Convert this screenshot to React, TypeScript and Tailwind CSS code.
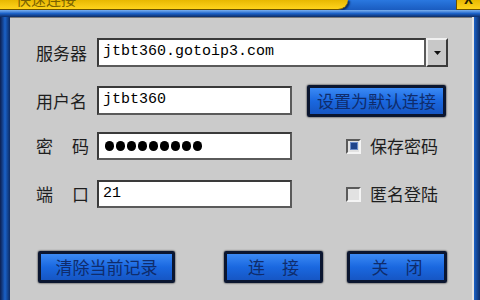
import React from 'react'

const cjk = { fontFamily: '"Noto Sans CJK SC", "Noto Sans", sans-serif' }
const mono = { fontFamily: '"Liberation Mono", "DejaVu Sans Mono", monospace' }

function Field({ w, children }: { w: string; children?: React.ReactNode }) {
  return (
    <div
      className={`${w} h-full bg-white border-2 border-t-[#3a3a3a] border-l-[#3a3a3a] border-r-[#5a5a5a] border-b-[#5a5a5a] flex items-center px-[4px] text-[15px] text-black`}
      style={mono}
    >
      {children}
    </div>
  )
}

function BlueButton({ w, children }: { w: string; children: React.ReactNode }) {
  return (
    <div
      className={`${w} h-[32px] shrink-0 rounded-[2px] border-[3px] border-[#0b1630] bg-gradient-to-b from-[#3b8af5] via-[#1a68e0] to-[#1656c4] shadow-[0_0_2px_#000] flex items-center justify-center text-[17px] text-[#0f2c6c]`}
      style={cjk}
    >
      {children}
    </div>
  )
}

function Checkbox({ checked, label }: { checked: boolean; label: string }) {
  return (
    <div className="flex items-center ml-[54px]">
      <div className="w-[15px] h-[15px] bg-[#e2e2e2] border-2 border-t-[#5a5a5a] border-l-[#5a5a5a] border-r-[#f4f4f4] border-b-[#f4f4f4] flex items-center justify-center">
        {checked && <div className="w-[8px] h-[8px] bg-[#20448a] border border-[#6c8cc8]" />}
      </div>
      <span className="ml-[9px] text-[17px] text-[#1e1e1e]" style={cjk}>{label}</span>
    </div>
  )
}

export default function App() {
  return (
    <div className="w-[480px] h-[300px] overflow-hidden bg-[#1a62c8] flex flex-col">
      {/* title strip */}
      <div className="h-[10px] flex shrink-0 bg-gradient-to-b from-[#2a78e0] to-[#1a5cc0]">
        <div className="w-[348px] h-full overflow-hidden rounded-br-[10px] bg-gradient-to-b from-[#e8b800] to-[#ffd41a] border-b border-[#6a5000] shadow-[2px_1px_2px_#0a2a60]">
          <div className="mt-[-10px] ml-[16px] text-[15px] leading-[18px] text-[#7a6200]" style={cjk}>快速连接</div>
        </div>
        <div className="flex-1" />
        <div className="w-[24px] h-full overflow-hidden bg-gradient-to-b from-[#e8b800] to-[#ffd41a] border-l border-b border-[#6a5000] flex justify-center">
          <span className="mt-[-7px] text-[14px] font-bold leading-[14px] text-[#2a2200]" style={mono}>X</span>
        </div>
      </div>
      <div className="h-[7px] shrink-0 bg-gradient-to-b from-[#7cb2f0] via-[#1c62c8] to-[#0c2c66]" />
      <div className="flex-1 flex">
        <div className="w-[10px] shrink-0 bg-gradient-to-r from-[#0c2050] via-[#1a62c8] to-[#0c2c66]" />
        <div className="flex-1 bg-[#cbcbcb] border-t border-[#7a7a7a] flex flex-col pl-[26px] pt-[20px]">
          {/* server */}
          <div className="flex items-center h-[29px]">
            <div className="w-[61px] text-[17px] text-[#1e1e1e]" style={cjk}>服务器</div>
            <Field w="w-[329px]">jtbt360.gotoip3.com</Field>
            <div className="w-[22px] h-full bg-[#c8c8c8] border-2 border-t-[#f0f0f0] border-l-[#f0f0f0] border-r-[#3a3a3a] border-b-[#3a3a3a] flex items-center justify-center">
              <svg width="7" height="4" viewBox="0 0 7 4"><path d="M0 0h7L3.5 4z" fill="#111" /></svg>
            </div>
          </div>
          {/* user */}
          <div className="flex items-center h-[29px] mt-[19px]">
            <div className="w-[61px] text-[17px] text-[#1e1e1e]" style={cjk}>用户名</div>
            <Field w="w-[195px]">jtbt360</Field>
            <div className="ml-[15px]">
              <BlueButton w="w-[139px]">设置为默认连接</BlueButton>
            </div>
          </div>
          {/* password */}
          <div className="flex items-center h-[28px] mt-[17px]">
            <div className="w-[61px]">
              <div className="w-[53px] flex justify-between text-[17px] text-[#1e1e1e]" style={cjk}><span>密</span><span>码</span></div>
            </div>
            <Field w="w-[195px]">
              <div className="flex gap-[2px] pl-[2px]">
                {Array.from({ length: 9 }).map((_, i) => (
                  <div key={i} className="w-[9px] h-[10px] rounded-full bg-black" />
                ))}
              </div>
            </Field>
            <Checkbox checked label="保存密码" />
          </div>
          {/* port */}
          <div className="flex items-center h-[28px] mt-[20px]">
            <div className="w-[61px]">
              <div className="w-[53px] flex justify-between text-[17px] text-[#1e1e1e]" style={cjk}><span>端</span><span>口</span></div>
            </div>
            <Field w="w-[195px]">21</Field>
            <Checkbox checked={false} label="匿名登陆" />
          </div>
          {/* actions */}
          <div className="flex items-center mt-[43px] ml-[2px]">
            <BlueButton w="w-[137px]">清除当前记录</BlueButton>
            <div className="ml-[49px]">
              <BlueButton w="w-[99px]">连　接</BlueButton>
            </div>
            <div className="ml-[24px]">
              <BlueButton w="w-[100px]">关　闭</BlueButton>
            </div>
          </div>
        </div>
        <div className="w-[8px] shrink-0 border-l-2 border-[#e4e4e4] bg-gradient-to-r from-[#1a62c8] to-[#0c2c66]" />
      </div>
    </div>
  )
}
